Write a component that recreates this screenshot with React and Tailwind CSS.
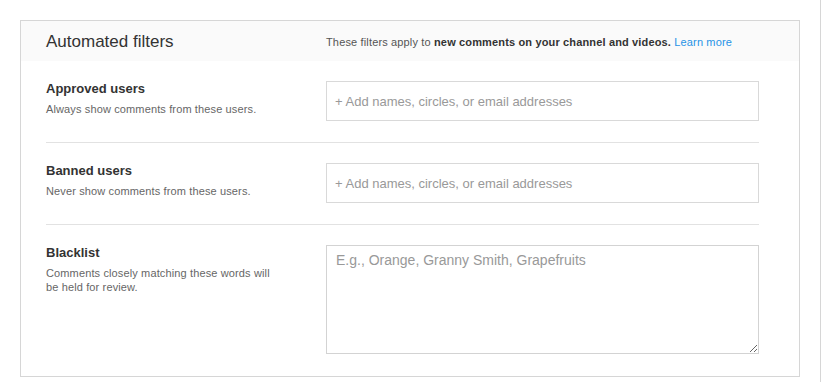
import React from 'react';

const FONT = { fontFamily: '"Liberation Sans", Arial, sans-serif' };

const ROWS = [
  {
    title: 'Approved users',
    desc: 'Always show comments from these users.',
    kind: 'input',
  },
  {
    title: 'Banned users',
    desc: 'Never show comments from these users.',
    kind: 'input',
  },
  {
    title: 'Blacklist',
    desc: 'Comments closely matching these words will be held for review.',
    kind: 'textarea',
  },
];

function FilterRow({ row, last }) {
  return (
    <div className={`flex pt-5 ${last ? 'pb-[22px]' : 'pb-[21px] border-b border-[#e2e2e2]'}`}>
      <div className="w-[280px] shrink-0">
        <p className="text-[13px] leading-4 font-bold text-[#333]">{row.title}</p>
        <p className="mt-[5px] text-[11px] leading-[14px] tracking-[0.13px] text-[#666] w-[225px]">{row.desc}</p>
      </div>
      {row.kind === 'input' ? (
        <input
          type="text"
          placeholder="+ Add names, circles, or email addresses"
          className="w-[433px] h-10 border border-[#d9d9d9] px-2 text-[13px] text-[#333] placeholder:text-[#999] outline-none"
          style={FONT}
        />
      ) : (
        <textarea
          placeholder="E.g., Orange, Granny Smith, Grapefruits"
          className="w-[433px] h-[109px] border border-[#d3d3d3] px-[9px] pt-[5px] text-[14px] leading-[18px] text-[#333] placeholder:text-[#999] outline-none"
          style={FONT}
        />
      )}
    </div>
  );
}

export default function App() {
  return (
    <div className="w-[821px] h-[382px] bg-white border-r border-[#d6d6d6] pt-5 pl-5" style={FONT}>
      <div className="w-[780px] h-[357px] border border-[#d6d6d6]">
        <div className="h-10 bg-[#fafafa] flex items-center pl-[25px]">
          <h1 className="w-[280px] text-[17px] text-[#333] pt-px">Automated filters</h1>
          <p className="text-[11px] tracking-[0.15px] text-[#555] pt-[2px]">
            These filters apply to <span className="font-bold text-[#333]">new comments on your channel and videos.</span>{' '}
            <a href="#" className="text-[#2793e6]">Learn more</a>
          </p>
        </div>
        <div className="pl-[25px] pr-[40px]">
          {ROWS.map((r, i) => (
            <FilterRow key={r.title} row={r} last={i === ROWS.length - 1} />
          ))}
        </div>
      </div>
    </div>
  );
}
